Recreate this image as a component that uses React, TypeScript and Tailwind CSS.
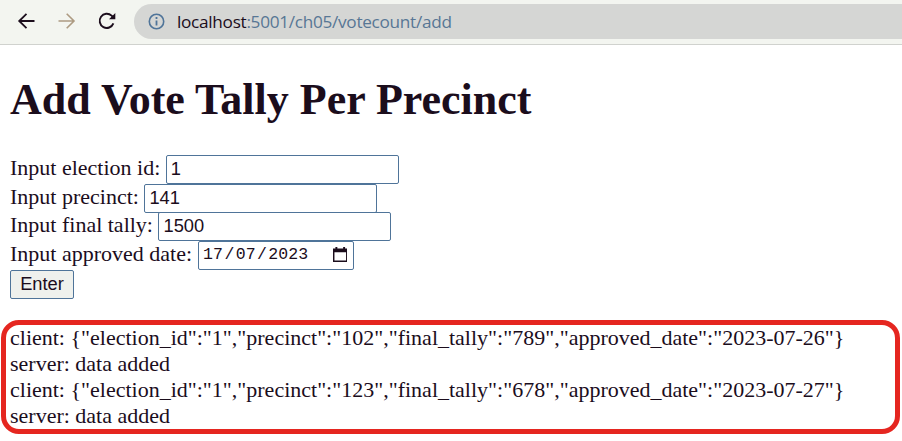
import React from "react";

const fieldBase =
  "box-border rounded-[2px] border border-[#4f7499] bg-white font-['Liberation_Sans',Arial,sans-serif] text-[18.3px] text-[#1b0d1c] outline-none";

function BrowserBar() {
  return (
    <header className="flex h-[45px] w-full shrink-0 items-start border-b border-[#d0d2ce] bg-[#f3f5f0]">
      <div className="flex h-[42px] w-[134px] shrink-0 items-center">
        <svg className="ml-[17px] h-[18px] w-[18px]" viewBox="0 0 18 18" fill="none" stroke="#1b0d1c" strokeWidth="1.8">
          <path d="M17.5 9H2M9.5 1.8 2.2 9 9.5 16.2" />
        </svg>
        <svg className="ml-[23px] h-[18px] w-[18px]" viewBox="0 0 18 18" fill="none" stroke="#ad9b82" strokeWidth="1.6">
          <path d="M.5 9H16M8.7 1.8 16 9 8.7 16.2" />
        </svg>
        <svg className="ml-[21px] h-[18px] w-[20px]" viewBox="0 0 20 18" fill="none">
          <path d="M16.4 11.4A7.1 7.1 0 1 1 14.6 3.6L16.5 5.5" stroke="#1b0d1c" strokeWidth="1.9" />
          <path d="M18.3 1v6.3H12z" fill="#1b0d1c" />
        </svg>
      </div>
      <div className="mt-1 flex h-[35px] flex-1 items-center rounded-l-full bg-[#d5d6d4]">
        <svg className="ml-[14px] h-[17px] w-[17px] shrink-0" viewBox="0 0 17 17" fill="none" stroke="#4f7499">
          <circle cx="8.5" cy="8.5" r="7.2" strokeWidth="1.6" />
          <path d="M8.5 7.5v5M8.5 4v2" strokeWidth="1.8" />
        </svg>
        <div className="ml-[12px] whitespace-nowrap font-['Open_Sans','Noto_Sans',sans-serif] text-[17.2px] leading-[26px] tracking-[-0.29px] text-[#587795]">
          <span className="text-[#1b0d1c]">localhost</span>
          <span>:5001/ch05/votecount/add</span>
        </div>
      </div>
    </header>
  );
}

function Field({ label, value }: { label: string; value: string }) {
  return (
    <div className="flex h-[28.7px] items-start">
      <label className="mr-[5.5px] leading-[26px]">{label}</label>
      <input type="text" defaultValue={value} className={`${fieldBase} h-[29px] w-[233px] px-[4px] pb-px`} />
    </div>
  );
}

export default function App() {
  return (
    <div className="flex h-[441px] w-[902px] flex-col overflow-hidden bg-white font-['Liberation_Serif','Times_New_Roman',serif] text-[22px] text-[#1b0d1c]">
      <BrowserBar />
      <main className="flex flex-1 flex-col">
        <h1 className="ml-[10px] mt-[28px] whitespace-nowrap text-[44px] font-bold leading-[54px]">
          Add Vote Tally Per Precinct
        </h1>
        <form className="ml-[10px] mt-[28px] flex flex-col whitespace-nowrap">
          <Field label="Input election id:" value="1" />
          <Field label="Input precinct:" value="141" />
          <Field label="Input final tally:" value="1500" />
          <div className="flex h-[28.9px] items-start">
            <label className="mr-[6px] leading-[26px]">Input approved date:</label>
            <div className={`${fieldBase} flex h-[29px] w-[156px] items-center justify-between pb-px pl-[4px] pr-[6px]`}>
              <span className="font-['Liberation_Mono',monospace] text-[16.5px] tracking-[0.1px]">
                17<span className="px-[1.3px]">/</span>07<span className="px-[1.3px]">/</span>2023
              </span>
              <svg className="mb-[2px] h-[15px] w-[14.5px]" viewBox="0 0 15 16" preserveAspectRatio="none">
                <path d="M2.5 0h2v1.5h6V0h2v1.5H15V16H0V1.5h2.5zM1.5 5.5v9h12v-9z" fill="#1b0d1c" fillRule="evenodd" />
              </svg>
            </div>
          </div>
          <button
            type="button"
            className="h-[29px] w-[64px] rounded-[2px] border border-[#4f7499] bg-[#eff1ed] font-['Liberation_Sans',Arial,sans-serif] text-[18.3px] leading-[26px]"
          >
            Enter
          </button>
        </form>
        <section className="ml-[1px] mt-[21px] h-[114px] w-[899px] whitespace-nowrap rounded-[18px] border-[5px] border-[#e52620] pl-[4px] leading-[26px]">
          <p>{'client: {"election_id":"1","precinct":"102","final_tally":"789","approved_date":"2023-07-26"}'}</p>
          <p>server: data added</p>
          <p>{'client: {"election_id":"1","precinct":"123","final_tally":"678","approved_date":"2023-07-27"}'}</p>
          <p>server: data added</p>
        </section>
      </main>
    </div>
  );
}
